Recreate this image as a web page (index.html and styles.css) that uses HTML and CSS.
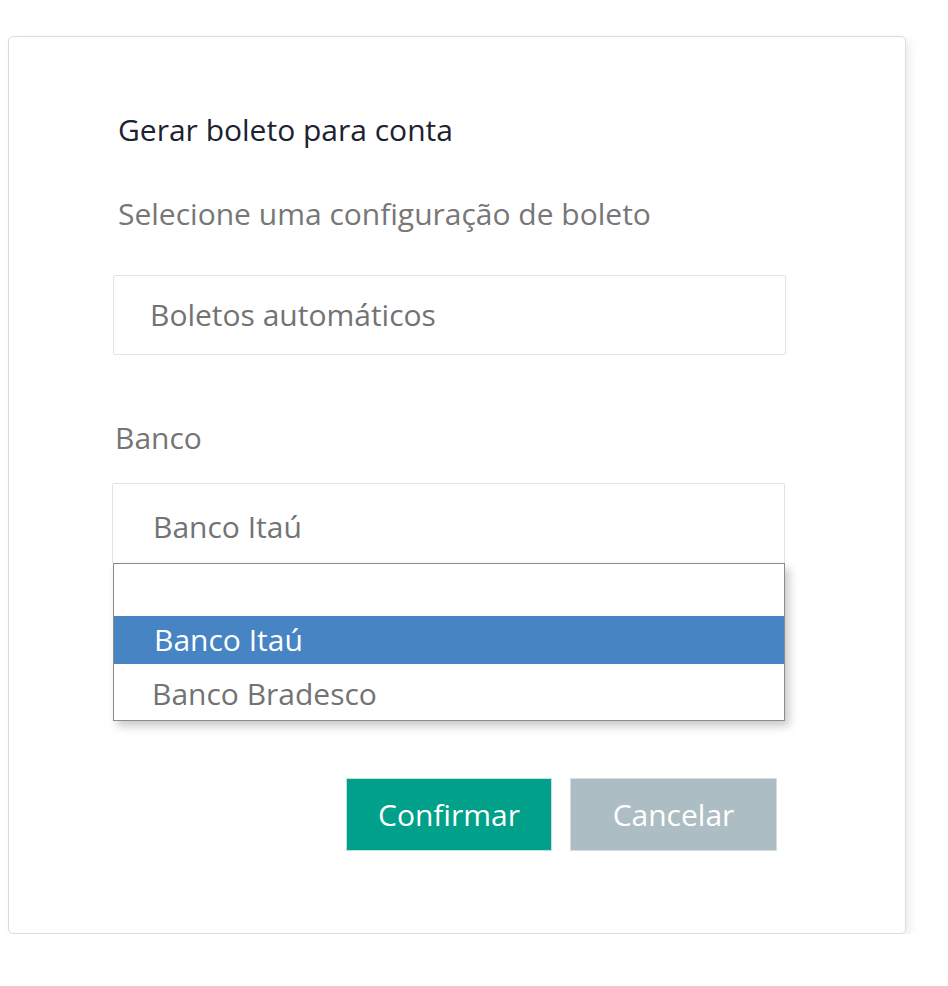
FILE: index.html
```html
<!DOCTYPE html>
<html lang="pt">
<head>
<meta charset="utf-8">
<title>Gerar boleto</title>
<link rel="stylesheet" href="styles.css">
</head>
<body>
<div class="card">
  <div class="form">
    <h1 class="title">Gerar boleto para conta</h1>
    <p class="subtitle">Selecione uma configuração de boleto</p>
    <div class="field field-config">Boletos automáticos</div>
    <label class="label">Banco</label>
    <div class="select-wrap">
      <div class="field field-select">Banco Itaú</div>
      <ul class="dropdown">
        <li class="opt opt-empty"></li>
        <li class="opt opt-active">Banco Itaú</li>
        <li class="opt opt-last">Banco Bradesco</li>
      </ul>
    </div>
    <div class="actions">
      <button class="btn btn-confirm">Confirmar</button>
      <button class="btn btn-cancel">Cancelar</button>
    </div>
  </div>
</div>
</body>
</html>
```
FILE: styles.css
```css
* { box-sizing: border-box; }
html, body { margin: 0; padding: 0; background: #fff; }
body {
  font-family: "Open Sans", "Noto Sans", sans-serif;
  font-size: 30px;
  line-height: 40px;
  color: #757575;
}
.card {
  margin: 36px 0 0 8px;
  width: 898px;
  height: 898px;
  border: 1px solid #d6dde3;
  border-radius: 5px;
  box-shadow: 4px 4px 10px rgba(0, 0, 0, 0.08);
  padding: 73px 0 0 104px;
}
.form {
  width: 673px;
  display: flex;
  flex-direction: column;
}
.title {
  margin: 0 0 44px 5px;
  font-size: 30px;
  font-weight: normal;
  line-height: 40px;
  color: #1c2230;
}
.subtitle {
  margin: 0 0 41px 5px;
  line-height: 40px;
  color: #777;
}
.field {
  height: 80px;
  border: 1px solid #dfe3e8;
  border-radius: 2px;
  display: flex;
  align-items: center;
  padding-left: 36px;
  color: #737373;
}
.label {
  margin: 63px 0 25px 2px;
  color: #757575;
}
.select-wrap {
  position: relative;
}
.field-select {
  width: 673px;
  margin-left: -1px;
  padding-left: 40px;
  padding-top: 6px;
  border-radius: 2px 2px 0 0;
  border-bottom: none;
}
.dropdown {
  position: absolute;
  left: 0;
  top: 80px;
  width: 672px;
  margin: 0;
  padding: 0;
  list-style: none;
  border: 1px solid #8c8c8c;
  background: #fff;
  box-shadow: 4px 5px 9px rgba(0, 0, 0, 0.22);
  z-index: 2;
}
.opt {
  display: flex;
  align-items: center;
  padding-left: 38px;
  color: #737373;
}
.opt-empty { height: 52px; }
.opt-active { height: 48px; background: #4684c4; color: #fff; padding-left: 40px; }
.opt-last { height: 56px; padding-top: 4px; }
.actions {
  margin-top: 215px;
  margin-right: 9px;
  display: flex;
  justify-content: flex-end;
  gap: 18px;
}
.btn {
  width: 206px;
  height: 73px;
  border: 1px solid #cfe2de;
  font-family: inherit;
  font-size: 30px;
  color: #fff;
  cursor: pointer;
}
.btn-confirm { background: #00a08a; border-color: #bfe3dc; }
.btn-cancel { background: #adbdc4; border-color: #d4dde1; width: 207px; }
```
